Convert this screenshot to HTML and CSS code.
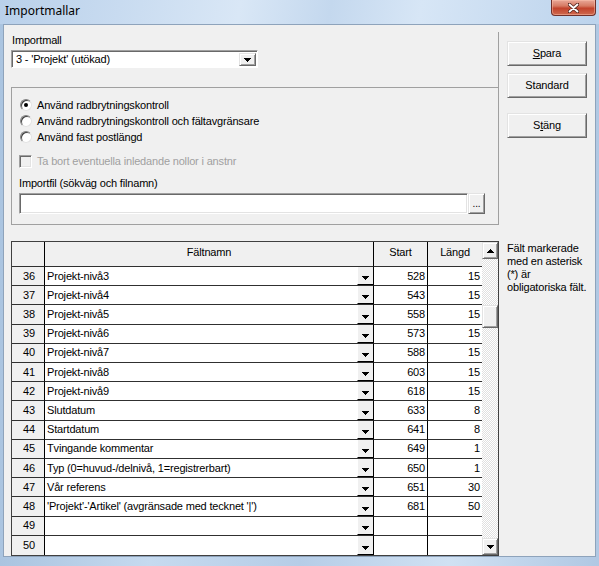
FILE: index.html
```html
<!DOCTYPE html>
<html lang="sv">
<head>
<meta charset="utf-8">
<title>Importmallar</title>
<link rel="stylesheet" href="styles.css">
</head>
<body>
<div class="window">
  <div class="titlebar">
    <span class="title">Importmallar</span>
    <div class="close">
      <svg width="11" height="10" viewBox="0 0 11 10"><path d="M1 1 L10 9 M10 1 L1 9" stroke="#5a2a22" stroke-width="3.4" stroke-linecap="round"/><path d="M1.5 1.5 L9.5 8.5 M9.5 1.5 L1.5 8.5" stroke="#fff" stroke-width="1.8" stroke-linecap="round"/></svg>
    </div>
  </div>
  <div class="client">
    <div class="top">
      <div class="leftcol">
        <div class="mall">
          <div class="lbl">Importmall</div>
          <div class="combo">
            <span class="combo-text">3 - 'Projekt' (utökad)</span>
            <span class="dd btn3d"><svg class="tri" width="7" height="4" viewBox="0 0 7 4"><path d="M0 0h7v1H0zM1 1h5v1H1zM2 2h3v1H2zM3 3h1v1H3z" fill="#000"/></svg></span>
          </div>
        </div>
        <div class="group">
          <div class="opt"><span class="radio checked"></span><span class="otext">Använd radbrytningskontroll</span></div>
          <div class="opt"><span class="radio"></span><span class="otext">Använd radbrytningskontroll och fältavgränsare</span></div>
          <div class="opt"><span class="radio"></span><span class="otext">Använd fast postlängd</span></div>
          <div class="opt chkrow"><span class="checkbox"></span><span class="otext disabled">Ta bort eventuella inledande nollor i anstnr</span></div>
          <div class="filelbl">Importfil (sökväg och filnamn)</div>
          <div class="filerow"><div class="textbox"></div><div class="browse btn3d">...</div></div>
        </div>
      </div>
      <div class="rightcol">
        <div class="btn btn3d btn-spara"><span><u>S</u>para</span></div>
        <div class="btn btn3d btn-standard"><span>Standard</span></div>
        <div class="btn btn3d btn-stang"><span>S<u>t</u>äng</span></div>
      </div>
    </div>
    <div class="bottom">
      <div class="grid">
        <div class="cells">
          <div class="c hdr rh"></div>
          <div class="c hdr">Fältnamn</div>
          <div class="c hdr">Start</div>
          <div class="c hdr last">Längd</div>

          <div class="c rh">36</div><div class="c fn"><span class="fname">Projekt-nivå3</span><span class="cbtn"><svg width="7" height="4" viewBox="0 0 7 4"><path d="M0 0h7v1H0zM1 1h5v1H1zM2 2h3v1H2zM3 3h1v1H3z"/></svg></span></div><div class="c num">528</div><div class="c num last">15</div>
          <div class="c rh">37</div><div class="c fn"><span class="fname">Projekt-nivå4</span><span class="cbtn"><svg width="7" height="4" viewBox="0 0 7 4"><path d="M0 0h7v1H0zM1 1h5v1H1zM2 2h3v1H2zM3 3h1v1H3z"/></svg></span></div><div class="c num">543</div><div class="c num last">15</div>
          <div class="c rh">38</div><div class="c fn"><span class="fname">Projekt-nivå5</span><span class="cbtn"><svg width="7" height="4" viewBox="0 0 7 4"><path d="M0 0h7v1H0zM1 1h5v1H1zM2 2h3v1H2zM3 3h1v1H3z"/></svg></span></div><div class="c num">558</div><div class="c num last">15</div>
          <div class="c rh">39</div><div class="c fn"><span class="fname">Projekt-nivå6</span><span class="cbtn"><svg width="7" height="4" viewBox="0 0 7 4"><path d="M0 0h7v1H0zM1 1h5v1H1zM2 2h3v1H2zM3 3h1v1H3z"/></svg></span></div><div class="c num">573</div><div class="c num last">15</div>
          <div class="c rh">40</div><div class="c fn"><span class="fname">Projekt-nivå7</span><span class="cbtn"><svg width="7" height="4" viewBox="0 0 7 4"><path d="M0 0h7v1H0zM1 1h5v1H1zM2 2h3v1H2zM3 3h1v1H3z"/></svg></span></div><div class="c num">588</div><div class="c num last">15</div>
          <div class="c rh">41</div><div class="c fn"><span class="fname">Projekt-nivå8</span><span class="cbtn"><svg width="7" height="4" viewBox="0 0 7 4"><path d="M0 0h7v1H0zM1 1h5v1H1zM2 2h3v1H2zM3 3h1v1H3z"/></svg></span></div><div class="c num">603</div><div class="c num last">15</div>
          <div class="c rh">42</div><div class="c fn"><span class="fname">Projekt-nivå9</span><span class="cbtn"><svg width="7" height="4" viewBox="0 0 7 4"><path d="M0 0h7v1H0zM1 1h5v1H1zM2 2h3v1H2zM3 3h1v1H3z"/></svg></span></div><div class="c num">618</div><div class="c num last">15</div>
          <div class="c rh">43</div><div class="c fn"><span class="fname">Slutdatum</span><span class="cbtn"><svg width="7" height="4" viewBox="0 0 7 4"><path d="M0 0h7v1H0zM1 1h5v1H1zM2 2h3v1H2zM3 3h1v1H3z"/></svg></span></div><div class="c num">633</div><div class="c num last">8</div>
          <div class="c rh">44</div><div class="c fn"><span class="fname">Startdatum</span><span class="cbtn"><svg width="7" height="4" viewBox="0 0 7 4"><path d="M0 0h7v1H0zM1 1h5v1H1zM2 2h3v1H2zM3 3h1v1H3z"/></svg></span></div><div class="c num">641</div><div class="c num last">8</div>
          <div class="c rh">45</div><div class="c fn"><span class="fname">Tvingande kommentar</span><span class="cbtn"><svg width="7" height="4" viewBox="0 0 7 4"><path d="M0 0h7v1H0zM1 1h5v1H1zM2 2h3v1H2zM3 3h1v1H3z"/></svg></span></div><div class="c num">649</div><div class="c num last">1</div>
          <div class="c rh">46</div><div class="c fn"><span class="fname">Typ (0=huvud-/delnivå, 1=registrerbart)</span><span class="cbtn"><svg width="7" height="4" viewBox="0 0 7 4"><path d="M0 0h7v1H0zM1 1h5v1H1zM2 2h3v1H2zM3 3h1v1H3z"/></svg></span></div><div class="c num">650</div><div class="c num last">1</div>
          <div class="c rh">47</div><div class="c fn"><span class="fname">Vår referens</span><span class="cbtn"><svg width="7" height="4" viewBox="0 0 7 4"><path d="M0 0h7v1H0zM1 1h5v1H1zM2 2h3v1H2zM3 3h1v1H3z"/></svg></span></div><div class="c num">651</div><div class="c num last">30</div>
          <div class="c rh">48</div><div class="c fn"><span class="fname">'Projekt'-'Artikel' (avgränsade med tecknet '|')</span><span class="cbtn"><svg width="7" height="4" viewBox="0 0 7 4"><path d="M0 0h7v1H0zM1 1h5v1H1zM2 2h3v1H2zM3 3h1v1H3z"/></svg></span></div><div class="c num">681</div><div class="c num last">50</div>
          <div class="c rh">49</div><div class="c fn"><span class="fname"></span><span class="cbtn"><svg width="7" height="4" viewBox="0 0 7 4"><path d="M0 0h7v1H0zM1 1h5v1H1zM2 2h3v1H2zM3 3h1v1H3z"/></svg></span></div><div class="c num"></div><div class="c num last"></div>
          <div class="c rh end">50</div><div class="c fn end"><span class="fname"></span><span class="cbtn"><svg width="7" height="4" viewBox="0 0 7 4"><path d="M0 0h7v1H0zM1 1h5v1H1zM2 2h3v1H2zM3 3h1v1H3z"/></svg></span></div><div class="c num end"></div><div class="c num last end"></div>
        </div>
        <div class="vscroll">
          <div class="sbtn btn3d"><svg width="7" height="4" viewBox="0 0 7 4"><path d="M3 0h1v1H3zM2 1h3v1H2zM1 2h5v1H1zM0 3h7v1H0z"/></svg></div>
          <div class="track">
            <div class="track-pre"></div>
            <div class="thumb btn3d"></div>
            <div class="track-post"></div>
          </div>
          <div class="sbtn btn3d"><svg width="7" height="4" viewBox="0 0 7 4"><path d="M0 0h7v1H0zM1 1h5v1H1zM2 2h3v1H2zM3 3h1v1H3z"/></svg></div>
        </div>
      </div>
      <div class="note">Fält markerade<br>med en asterisk<br>(*) är<br>obligatoriska fält.</div>
    </div>
  </div>
</div>
</body>
</html>
```

FILE: styles.css
```css
* { box-sizing: border-box; }

body {
  margin: 0;
  width: 599px;
  height: 566px;
  overflow: hidden;
  font-family: "Liberation Sans", Arial, sans-serif;
  font-size: 11px;
  letter-spacing: -0.17px;
  color: #000;
}

.window {
  width: 599px;
  height: 566px;
  display: flex;
  flex-direction: column;
  background: linear-gradient(to right, #aac4e0 0%, #c6daef 25%, #b6cde7 50%, #d0e1f3 75%, #b0c8e3 100%);
}

/* ---- title bar ---- */
.titlebar {
  height: 24px;
  flex: none;
  display: flex;
  justify-content: space-between;
  align-items: flex-start;
  background: linear-gradient(100deg, #b9d0ea 0%, #c8dbf0 20%, #d9e7f6 40%, #c4d8ee 55%, #d7e6f6 70%, #bcd3ec 100%);
}

.title {
  font-family: "Noto Sans", "Liberation Sans", sans-serif;
  font-size: 12px;
  letter-spacing: 0;
  line-height: 16px;
  padding: 3px 0 0 5px;
  color: #000;
}

.close {
  width: 45px;
  height: 16px;
  margin-right: 3px;
  display: flex;
  align-items: center;
  justify-content: center;
  border: 1px solid #70302a;
  border-top: none;
  border-radius: 0 0 4px 4px;
  background: linear-gradient(#e9a898 0%, #d67a63 40%, #c2432c 55%, #cf6a4f 100%);
  box-shadow: inset 0 0 0 1px rgba(255, 200, 180, 0.45);
}

/* ---- client ---- */
.client {
  margin: 0 3px;
  height: 533px;
  flex: none;
  background: #f0f0f0;
  border: 1px solid #8ea3bb;
  display: flex;
  flex-direction: column;
}

.top {
  height: 200px;
  display: flex;
}

.leftcol {
  margin-left: 7px;
  width: 488px;
  display: flex;
  flex-direction: column;
}

.mall {
  margin-top: 7px;
  height: 55px;
  border-right: 1px solid #a0a0a0;
}

.lbl {
  line-height: 13px;
  padding: 2px 0 0 1px;
}

.combo {
  margin-top: 3px;
  width: 247px;
  height: 18px;
  background: #fff;
  border: 1px solid;
  border-color: #a0a0a0 #fff #fff #a0a0a0;
  box-shadow: inset 1px 1px 0 #696969;
  display: flex;
  align-items: stretch;
  padding: 2px 1px 1px 2px;
}

.combo-text {
  flex: 1;
  line-height: 13px;
  padding-left: 2px;
}

.btn3d {
  background: #f0f0f0;
  border: 1px solid;
  border-color: #e3e3e3 #696969 #696969 #e3e3e3;
  box-shadow: inset 1px 1px 0 #fff, inset -1px -1px 0 #a0a0a0;
}

.dd {
  width: 17px;
  display: flex;
  align-items: center;
  justify-content: center;
}

.group {
  height: 138px;
  border: 1px solid #a0a0a0;
  padding-top: 9px;
}

.opt {
  height: 16px;
  display: flex;
  align-items: center;
  padding-left: 8px;
}

.otext { margin-left: 5px; }

.radio {
  width: 12px;
  height: 12px;
  border-radius: 50%;
  background: #fff;
  border: 1px solid;
  border-color: #808080 #e3e3e3 #e3e3e3 #808080;
  box-shadow: inset 1px 1px 0 #404040;
  display: flex;
  align-items: center;
  justify-content: center;
}

.radio.checked::after {
  content: "";
  width: 4px;
  height: 4px;
  border-radius: 50%;
  background: #000;
}

.chkrow {
  margin-top: 8px;
  padding-left: 7px;
}

.checkbox {
  width: 13px;
  height: 13px;
  background: #f0f0f0;
  border: 1px solid;
  border-color: #a0a0a0 #fff #fff #a0a0a0;
  box-shadow: inset 1px 1px 0 #696969, inset -1px -1px 0 #e3e3e3;
}

.disabled { color: #a0a0a0; }

.filelbl {
  margin-top: 8px;
  padding-left: 7px;
  line-height: 13px;
}

.filerow {
  margin-top: 3px;
  padding-left: 7px;
  height: 21px;
  display: flex;
}

.textbox {
  width: 449px;
  background: #fff;
  border: 1px solid;
  border-color: #a0a0a0 #fff #fff #a0a0a0;
  box-shadow: inset 1px 1px 0 #696969, inset -1px -1px 0 #e3e3e3;
}

.browse {
  width: 17px;
  font-size: 10px;
  line-height: 12px;
  display: flex;
  align-items: flex-end;
  justify-content: center;
  padding-bottom: 3px;
}

.rightcol {
  margin-left: 8px;
  width: 80px;
  display: flex;
  flex-direction: column;
}

.btn {
  height: 25px;
  display: flex;
  align-items: center;
  justify-content: center;
  line-height: 13px;
}

.btn-spara { margin-top: 16px; }
.btn-standard { margin-top: 7px; }
.btn-stang { margin-top: 15px; }

/* ---- bottom / grid ---- */
.bottom {
  display: flex;
  margin-top: 16px;
}

.grid {
  margin-left: 7px;
  width: 488px;
  height: 315px;
  border: 1px solid #404040;
  display: flex;
  background: #fff;
}

.cells {
  width: 470px;
  display: grid;
  grid-template-columns: 33px 329px 54px 54px;
  grid-template-rows: 25px repeat(15, 1fr);
}

.c {
  border-right: 1px solid #000;
  border-bottom: 1px solid #303030;
  line-height: 13px;
  white-space: nowrap;
  overflow: hidden;
}

.c.last { border-right: none; }
.c.end { border-bottom: none; }

.hdr {
  background: #f0f0f0;
  text-align: center;
  padding-top: 4px;
}

.rh {
  background: #f0f0f0;
  text-align: center;
  display: flex;
  align-items: center;
  justify-content: center;
  padding-left: 2px;
}

.hdr.rh { display: block; }

.fn {
  display: flex;
  align-items: stretch;
}

.fname {
  flex: 1;
  padding-left: 2px;
  display: flex;
  align-items: center;
}

.cbtn {
  width: 16px;
  background: #f0f0f0;
  border-left: 1px solid #fff;
  border-bottom: 1px solid #000;
  display: flex;
  align-items: flex-end;
  justify-content: center;
  padding-bottom: 4px;
}

.num {
  text-align: right;
  padding-right: 2px;
  display: flex;
  align-items: center;
  justify-content: flex-end;
}

.vscroll {
  width: 16px;
  display: flex;
  flex-direction: column;
}

.sbtn {
  height: 17px;
  flex: none;
  display: flex;
  align-items: center;
  justify-content: center;
}

.track {
  flex: 1;
  display: flex;
  flex-direction: column;
  background-color: #fff;
  background-image: repeating-conic-gradient(#fff 0 25%, #e0e0e0 0 50%);
  background-size: 2px 2px;
}

.track-pre { height: 46px; flex: none; }

.thumb {
  height: 23px;
  flex: none;
}

.track-post { flex: 1; }

.note {
  margin-left: 8px;
  line-height: 13px;
  padding-top: 1px;
}
```
